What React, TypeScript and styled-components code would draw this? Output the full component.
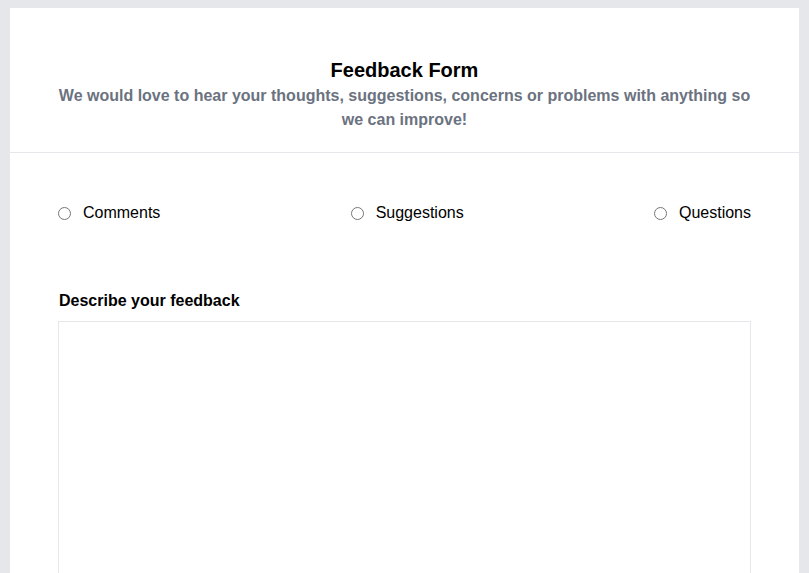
import styled, { createGlobalStyle } from "styled-components";

const GlobalStyle = createGlobalStyle`
  html, body {
    margin: 0;
    padding: 0;
    background: #e5e7eb;
    font-family: "Liberation Sans", Arial, sans-serif;
    color: #000;
  }
  * { box-sizing: border-box; }
`;

const Page = styled.div`
  padding: 8px 10px 0;
  min-height: 100vh;
`;

const Card = styled.form`
  background: #fff;
  min-height: calc(100vh - 8px);
`;

const Header = styled.header`
  padding: 48px 48px 20px;
  text-align: center;
  border-bottom: 1px solid #e5e7eb;
`;

const Title = styled.h1`
  margin: 0;
  font-size: 20px;
  line-height: 28px;
  font-weight: 700;
`;

const Subtitle = styled.p`
  margin: 0;
  font-size: 16px;
  line-height: 24px;
  font-weight: 700;
  color: #6b7280;
`;

const Body = styled.div`
  padding: 48px 48px 0;
`;

const RadioRow = styled.div`
  display: flex;
  justify-content: space-between;
  align-items: center;
`;

const RadioLabel = styled.label`
  display: flex;
  align-items: center;
  gap: 12px;
  font-size: 16px;
  line-height: 24px;
  cursor: pointer;
`;

const Radio = styled.input`
  margin: 0;
  width: 13px;
  height: 13px;
`;

const Field = styled.div`
  margin-top: 64px;
  display: flex;
  flex-direction: column;
  gap: 8px;
`;

const FieldLabel = styled.label`
  padding-left: 1px;
  font-size: 16px;
  line-height: 24px;
  font-weight: 700;
`;

const TextArea = styled.textarea`
  width: 100%;
  height: 300px;
  border: 1px solid #e5e7eb;
  border-radius: 0;
  resize: none;
  padding: 8px;
  font-family: inherit;
  font-size: 16px;
  outline: none;
`;

const options = ["Comments", "Suggestions", "Questions"];

export default function App() {
  return (
    <>
      <GlobalStyle />
      <Page>
        <Card onSubmit={(e) => e.preventDefault()}>
          <Header>
            <Title>Feedback Form</Title>
            <Subtitle>
              We would love to hear your thoughts, suggestions, concerns or problems with anything so we can
              improve!
            </Subtitle>
          </Header>
          <Body>
            <RadioRow>
              {options.map((o) => (
                <RadioLabel key={o}>
                  <Radio type="radio" name="type" value={o} />
                  {o}
                </RadioLabel>
              ))}
            </RadioRow>
            <Field>
              <FieldLabel htmlFor="feedback">Describe your feedback</FieldLabel>
              <TextArea id="feedback" />
            </Field>
          </Body>
        </Card>
      </Page>
    </>
  );
}
